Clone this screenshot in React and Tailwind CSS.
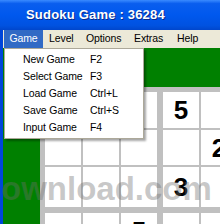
import React from 'react';

const font = "font-['Liberation_Sans',Arial,sans-serif]";

// board digits (row, col) visible in the shot
const digits = { '0-3': '5', '1-4': '2', '2-3': '3', '3-2': '5' };
const rowHeights = [36, 35, 40, 36, 36, 36, 36, 36, 36];

const menuItems = [
  ['New Game', 'F2'],
  ['Select Game', 'F3'],
  ['Load Game', 'Ctrl+L'],
  ['Save Game', 'Ctrl+S'],
  ['Input Game', 'F4'],
];

const Box = ({ br, bc }) => {
  const cells = [];
  for (let r = 0; r < 3; r++) {
    for (let c = 0; c < 3; c++) {
      const row = br * 3 + r;
      const col = bc * 3 + c;
      cells.push(
        <div
          key={`${r}-${c}`}
          className="bg-white flex items-center justify-center text-[26px] font-bold text-black leading-none"
          style={{ height: rowHeights[row] }}
        >
          {digits[`${row}-${col}`] || ''}
        </div>
      );
    }
  }
  return <div className="grid grid-cols-[36px_36px_36px] gap-[2px] bg-[#C0C0C0]">{cells}</div>;
};

export default function App() {
  return (
    <div className={`relative w-[220px] h-[224px] overflow-hidden flex flex-col bg-[#0043D6] ${font}`}>
      {/* title bar */}
      <div className="h-[30px] shrink-0 flex items-center pl-[26px] bg-[linear-gradient(to_bottom,#3A8BFF,#0A5EEE_12%,#0058EE_50%,#0052E0_85%,#0046CC)]">
        <span className="text-white font-bold text-[13px] tracking-[0.2px] [text-shadow:1px_1px_#0A2A8A] whitespace-nowrap">
          Sudoku Game : 36284
        </span>
      </div>

      <div className="flex flex-1 min-h-0">
        <div className="w-[3px] shrink-0 bg-[#0046DA]" />
        <div className="flex-1 min-w-0 flex flex-col">
          {/* menu bar */}
          <div className="h-[18px] shrink-0 bg-[#ECE9D8] flex items-stretch pl-px text-[10.5px] tracking-[-0.1px] text-black whitespace-nowrap">
            <div className="w-[39px] flex items-center justify-center bg-[#316AC5] text-white">Game</div>
            <div className="pl-[6px] w-[38px] flex items-center">Level</div>
            <div className="pl-[5px] w-[48px] flex items-center">Options</div>
            <div className="pl-[5px] w-[43px] flex items-center">Extras</div>
            <div className="pl-[5px] flex items-center">Help</div>
          </div>

          {/* board area */}
          <div className="flex-1 min-h-0 bg-[#008000] pl-[37px] pt-[39px] overflow-hidden">
            <div className="bg-[#C0C0C0] pl-[5px] pt-[5px] w-max">
              <div className="grid grid-cols-[auto_auto_auto] gap-[6px]">
                {[0, 1, 2].map((br) =>
                  [0, 1, 2].map((bc) => <Box key={`${br}-${bc}`} br={br} bc={bc} />)
                )}
              </div>
            </div>
          </div>
        </div>
      </div>

      {/* watermark */}
      <div className="absolute left-[1px] top-[172px] text-[33px] font-bold leading-none text-[rgba(110,110,110,0.38)] whitespace-nowrap pointer-events-none">
        ownload.com
      </div>

      {/* Game dropdown */}
      <div className="absolute left-[4px] top-[48px] w-[140px] bg-white border border-[#ACA899] shadow-[2px_2px_2px_rgba(0,0,0,0.35)] py-[2px] text-[10.5px] tracking-[-0.1px] text-black">
        {menuItems.map(([label, key]) => (
          <div key={label} className="h-[17px] flex items-center pl-[18px] whitespace-nowrap">
            <span className="w-[67px]">{label}</span>
            <span>{key}</span>
          </div>
        ))}
      </div>
    </div>
  );
}
